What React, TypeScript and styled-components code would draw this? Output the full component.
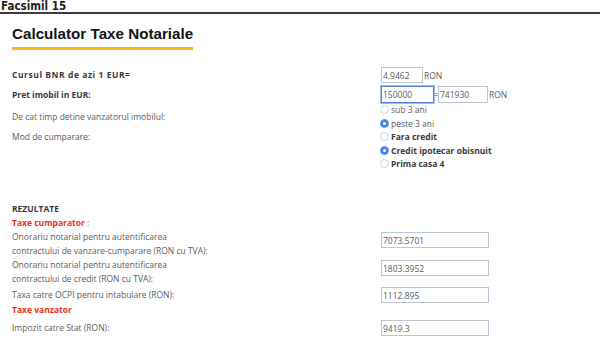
import React from 'react';
import styled, { createGlobalStyle } from 'styled-components';

const textGray = '#5c5c5c';
const darkGray = '#3a3a3a';
const red = '#e5331b';
const blue = '#3b7fe2';

const GlobalStyle = createGlobalStyle`
  html, body {
    margin: 0;
    padding: 0;
    background: #ffffff;
  }
  body {
    font-family: 'Open Sans', 'Liberation Sans', sans-serif;
    font-size: 8.5px;
    color: ${textGray};
  }
`;

const Page = styled.div`
  width: 600px;
  height: 348px;
  overflow: hidden;
  background: #fff;
`;

const Facsimil = styled.div`
  height: 12px;
  padding-left: 1px;
  border-bottom: 2px solid #3c3c3c;
  font-family: 'Liberation Sans Narrow', 'DejaVu Sans Condensed', 'Roboto Condensed', sans-serif;
  font-stretch: condensed;
  font-weight: bold;
  font-size: 11.5px;
  line-height: 12px;
  color: #1e1e1e;
`;

const Content = styled.div`
  padding: 0 12px;
`;

const Title = styled.h1`
  display: inline-block;
  margin: 11px 0 0;
  padding-bottom: 5px;
  border-bottom: 3px solid #f4b81e;
  font-family: 'Liberation Sans', Arial, sans-serif;
  font-size: 15.2px;
  line-height: 17px;
  font-weight: bold;
  color: #141414;
`;

const Form = styled.div`
  margin-top: 17px;
  display: flex;
  flex-direction: column;
`;

const Row = styled.div<{ $top?: number; $align?: string }>`
  display: flex;
  align-items: ${(p) => p.$align || 'center'};
  margin-top: ${(p) => p.$top || 0}px;
`;

const Label = styled.div<{ $bold?: boolean; $spaced?: boolean }>`
  width: 369px;
  flex-shrink: 0;
  line-height: 13.5px;
  font-weight: ${(p) => (p.$bold ? 700 : 400)};
  letter-spacing: ${(p) => (p.$spaced ? '0.55px' : 'normal')};
  color: ${(p) => (p.$bold ? darkGray : textGray)};
`;

const Field = styled.div`
  display: flex;
  align-items: center;
`;

const Options = styled.div`
  display: flex;
  flex-direction: column;
`;

const Input = styled.input<{ $w: number; $h?: number; $focused?: boolean }>`
  box-sizing: border-box;
  width: ${(p) => p.$w}px;
  height: ${(p) => p.$h || 16}px;
  margin: 0;
  padding: 0 1px;
  border: 1px solid ${(p) => (p.$focused ? '#4f86d8' : '#bcc6d2')};
  box-shadow: ${(p) => (p.$focused ? '0 0 0 1px rgba(79, 134, 216, 0.55)' : 'none')};
  border-radius: 0;
  outline: none;
  background: #fff;
  font-family: 'Open Sans', 'Liberation Sans', sans-serif;
  font-size: 8.5px;
  color: ${textGray};
`;

const Unit = styled.span`
  margin-left: 1px;
  color: ${textGray};
`;

const Equals = styled.span`
  width: 4px;
  text-align: center;
  color: ${textGray};
`;

const Option = styled.label<{ $bold?: boolean }>`
  display: flex;
  align-items: center;
  height: 13.5px;
  gap: 2px;
  font-weight: ${(p) => (p.$bold ? 700 : 400)};
  color: ${(p) => (p.$bold ? darkGray : textGray)};
`;

const Radio = styled.span<{ $checked?: boolean }>`
  box-sizing: border-box;
  width: 9px;
  height: 9px;
  margin-left: -1px;
  border-radius: 50%;
  background: #fff;
  border: 1px solid ${(p) => (p.$checked ? blue : '#d3d6da')};
  box-shadow: ${(p) => (p.$checked ? `inset 0 0 0 2px ${blue}` : 'none')};
`;

const ResultsTitle = styled.div`
  margin-top: 31.5px;
  line-height: 14px;
  font-weight: 700;
  color: ${darkGray};
`;

const Section = styled.div`
  line-height: 14px;
  color: ${textGray};
`;

const Red = styled.span`
  font-weight: 700;
  color: ${red};
`;

const ResultRow = styled.div<{ $top?: number; $align?: string }>`
  display: flex;
  align-items: ${(p) => p.$align || 'center'};
  margin-top: ${(p) => p.$top || 0}px;
`;

const ResultLabel = styled.div`
  width: 369px;
  flex-shrink: 0;
  line-height: 14px;
  color: ${textGray};
`;

const Nudge = styled.div`
  padding-top: 2px;
`;

type Choice = { label: string; bold?: boolean; checked?: boolean };

const durations: Choice[] = [
  { label: 'sub 3 ani' },
  { label: 'peste 3 ani', checked: true },
];

const modes: Choice[] = [
  { label: 'Fara credit', bold: true },
  { label: 'Credit ipotecar obisnuit', bold: true, checked: true },
  { label: 'Prima casa 4', bold: true },
];

function Choices({ items }: { items: Choice[] }) {
  return (
    <Options>
      {items.map((c) => (
        <Option key={c.label} $bold={c.bold}>
          <Radio $checked={c.checked} />
          {c.label}
        </Option>
      ))}
    </Options>
  );
}

export default function App() {
  return (
    <Page>
      <GlobalStyle />
      <Facsimil>Facsimil 15</Facsimil>
      <Content>
        <Title>Calculator Taxe Notariale</Title>
        <Form>
          <Row>
            <Label $bold $spaced>Cursul BNR de azi 1 EUR=</Label>
            <Field>
              <Input $w={42} defaultValue="4.9462" />
              <Unit>RON</Unit>
            </Field>
          </Row>
          <Row $top={3}>
            <Label $bold>Pret imobil in EUR:</Label>
            <Field>
              <Input $w={53} $h={17} $focused defaultValue="150000" />
              <Equals>=</Equals>
              <Input $w={50} $h={17} defaultValue="741930" />
              <Unit>RON</Unit>
            </Field>
          </Row>
          <Row>
            <Label>De cat timp detine vanzatorul imobilul:</Label>
            <Choices items={durations} />
          </Row>
          <Row $align="flex-start">
            <Label>Mod de cumparare:</Label>
            <Choices items={modes} />
          </Row>
        </Form>

        <ResultsTitle>REZULTATE</ResultsTitle>
        <Section>
          <Red>Taxe cumparator</Red> :
        </Section>
        <ResultRow $align="flex-start">
          <ResultLabel>
            Onorariu notarial pentru autentificarea
            <br />
            contractului de vanzare-cumparare (RON cu TVA):
          </ResultLabel>
          <Nudge>
            <Input $w={108} defaultValue="7073.5701" />
          </Nudge>
        </ResultRow>
        <ResultRow $align="flex-start">
          <ResultLabel>
            Onorariu notarial pentru autentificarea
            <br />
            contractului de credit (RON cu TVA):
          </ResultLabel>
          <Nudge>
            <Input $w={108} defaultValue="1803.3952" />
          </Nudge>
        </ResultRow>
        <ResultRow $top={1}>
          <ResultLabel>Taxa catre OCPI pentru intabulare (RON):</ResultLabel>
          <Input $w={108} defaultValue="1112.895" />
        </ResultRow>
        <Section>
          <Red>Taxe vanzator</Red>
        </Section>
        <ResultRow $top={3}>
          <ResultLabel>Impozit catre Stat (RON):</ResultLabel>
          <Input $w={108} defaultValue="9419.3" />
        </ResultRow>
      </Content>
    </Page>
  );
}
